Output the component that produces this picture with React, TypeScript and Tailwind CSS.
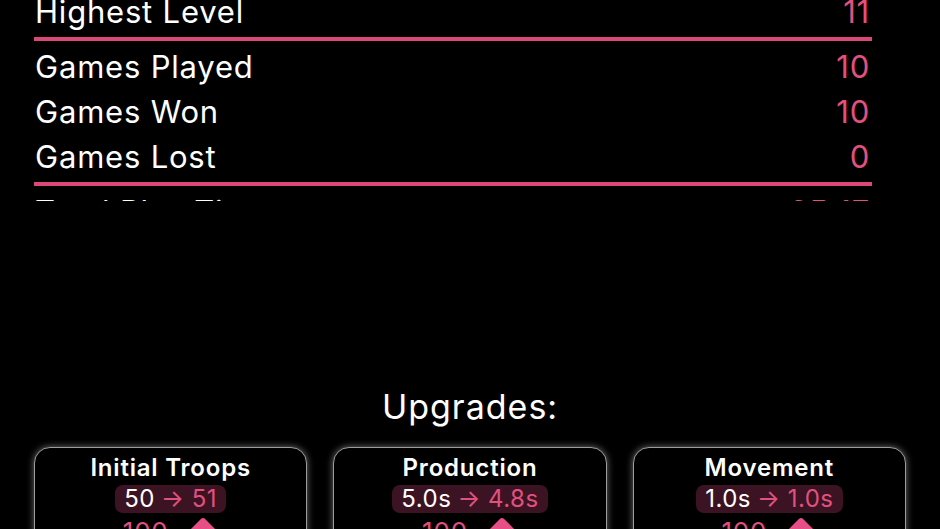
import React from 'react';

const stats: { label: string; value: string; divider?: boolean }[] = [
  { label: 'Highest Level', value: '11', divider: true },
  { label: 'Games Played', value: '10' },
  { label: 'Games Won', value: '10' },
  { label: 'Games Lost', value: '0', divider: true },
  { label: 'Total Play Time', value: '25:17' },
];

const upgrades = [
  { name: 'Initial Troops', from: '50', to: '51', cost: '100' },
  { name: 'Production', from: '5.0s', to: '4.8s', cost: '100' },
  { name: 'Movement', from: '1.0s', to: '1.0s', cost: '100' },
];

const Gem: React.FC = () => (
  <svg width="32" height="32" viewBox="0 0 32 32" className="shrink-0">
    <rect x="6" y="6" width="20" height="20" rx="3" fill="#e84f86" transform="rotate(45 16 16)" />
  </svg>
);

const UpgradeCard: React.FC<{ name: string; from: string; to: string; cost: string }> = ({ name, from, to, cost }) => (
  <div className="flex flex-col items-center rounded-[16px] border-[1.5px] border-[#9c9c9c] bg-black pt-[6px] shadow-[0_0_7px_rgba(255,255,255,0.45)] h-[120px]">
    <div className="text-[24px] leading-[28px] font-semibold tracking-[0.8px] text-white">{name}</div>
    <div className="mt-[3px] flex items-center rounded-[8px] bg-[#3b1322] px-[9px] h-[28px] text-[24px] leading-[28px] tracking-[0.5px]">
      <span className="text-white">{from}</span>
      <span className="ml-[6px] text-[#e2507f]">→ {to}</span>
    </div>
    <div className="mt-[2px] flex items-start gap-[18px] text-[26px] leading-[30px] tracking-[0.8px] text-[#e2507f]">
      <span className="pt-[2px]">{cost}</span>
      <Gem />
    </div>
  </div>
);

export default function App() {
  return (
    <div className="w-[940px] h-[529px] overflow-hidden bg-black text-white font-['Inter','Noto_Sans',sans-serif]">
      <div className="h-[201px] overflow-hidden pl-[34px] pr-[68px]">
        <div className="-mt-[11px]">
          {stats.map((s) => (
            <React.Fragment key={s.label}>
              <div className="flex h-[45px] items-center justify-between pl-[1px] pr-[2px] text-[31px] leading-[45px] tracking-[0.8px]">
                <span className="text-white">{s.label}</span>
                <span className="text-[#e2507f]">{s.value}</span>
              </div>
              {s.divider && <div className="my-[3px] h-[4px] w-full bg-[#dc477a]" />}
            </React.Fragment>
          ))}
        </div>
      </div>
      <div className="pt-[186px] text-center text-[34px] leading-[40px] tracking-[1px] text-white">Upgrades:</div>
      <div className="mt-[20px] grid grid-cols-3 gap-[26px] px-[34px]">
        {upgrades.map((u) => (
          <UpgradeCard key={u.name} {...u} />
        ))}
      </div>
    </div>
  );
}
